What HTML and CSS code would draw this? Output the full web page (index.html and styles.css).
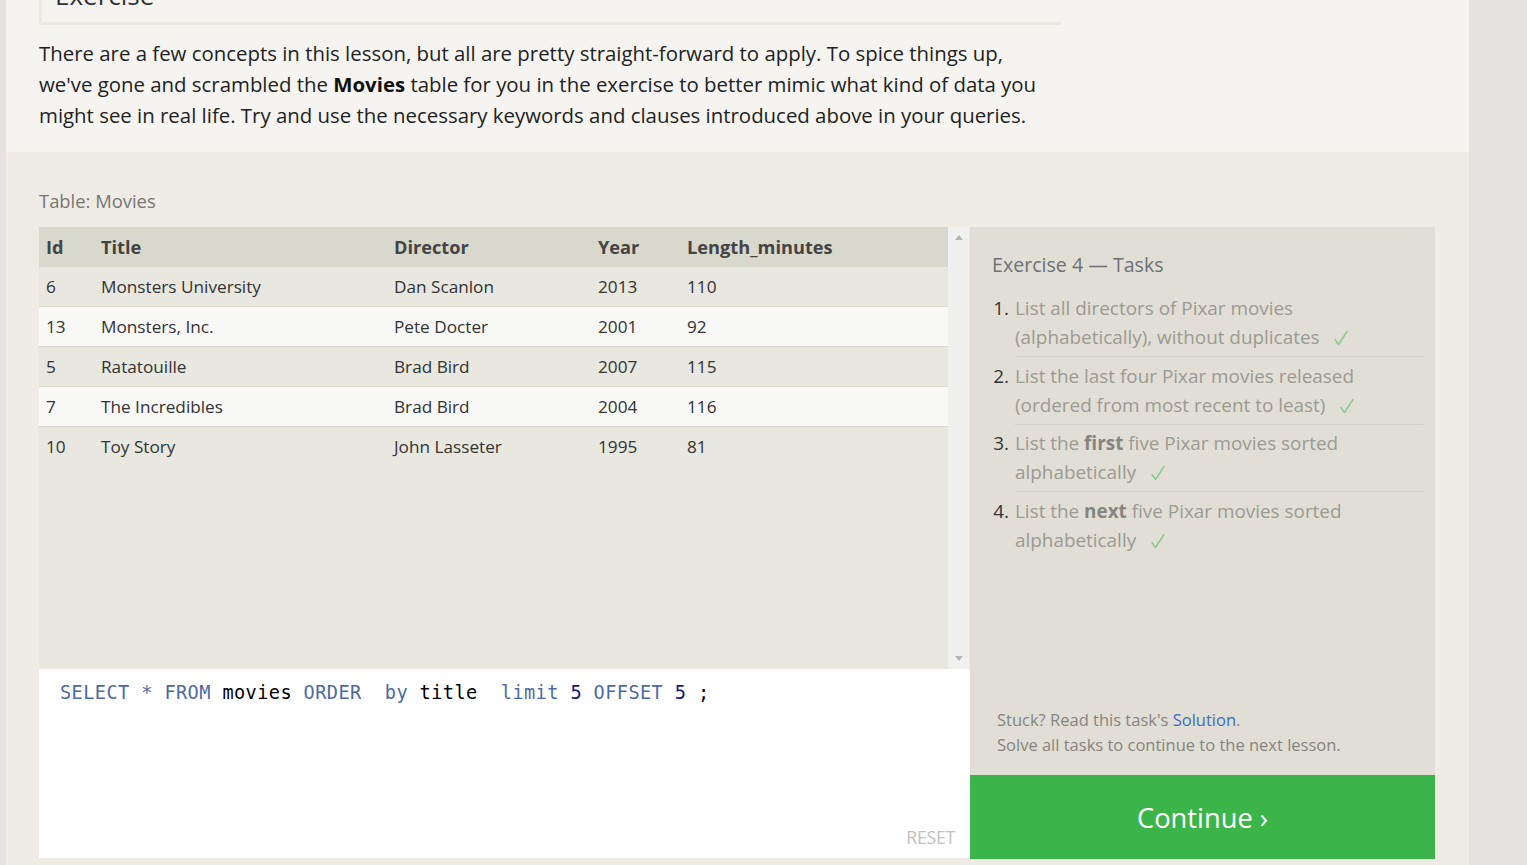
FILE: index.html
```html
<!DOCTYPE html>
<html lang="en">
<head>
<meta charset="utf-8">
<title>SQL Lesson – Exercise</title>
<link rel="stylesheet" href="styles.css">
</head>
<body>
<div class="page">
  <section class="intro">
    <div class="heading"><h2>Exercise</h2></div>
    <p class="lead">There are a few concepts in this lesson, but all are pretty straight-forward to apply. To spice things up, we've gone and scrambled the <strong>Movies</strong> table for you in the exercise to better mimic what kind of data you might see in real life. Try and use the necessary keywords and clauses introduced above in your queries.</p>
  </section>
  <section class="exercise">
    <div class="table-label">Table: Movies</div>
    <div class="workspace">
      <div class="left">
        <div class="results">
          <div class="table-wrap">
            <table class="movies">
              <thead>
                <tr><th class="c-id">Id</th><th class="c-title">Title</th><th class="c-dir">Director</th><th class="c-year">Year</th><th class="c-len">Length_minutes</th></tr>
              </thead>
              <tbody>
                <tr><td>6</td><td>Monsters University</td><td>Dan Scanlon</td><td>2013</td><td>110</td></tr>
                <tr><td>13</td><td>Monsters, Inc.</td><td>Pete Docter</td><td>2001</td><td>92</td></tr>
                <tr><td>5</td><td>Ratatouille</td><td>Brad Bird</td><td>2007</td><td>115</td></tr>
                <tr><td>7</td><td>The Incredibles</td><td>Brad Bird</td><td>2004</td><td>116</td></tr>
                <tr><td>10</td><td>Toy Story</td><td>John Lasseter</td><td>1995</td><td>81</td></tr>
              </tbody>
            </table>
          </div>
          <div class="scrollbar">
            <span class="arrow up"></span>
            <span class="arrow down"></span>
          </div>
        </div>
        <div class="editor">
          <div class="code"><span class="kw">SELECT</span> <span class="kw">*</span> <span class="kw">FROM</span> <span class="id">movies</span> <span class="kw">ORDER</span>  <span class="kw">by</span> <span class="id">title</span>  <span class="kw">limit</span> <span class="num">5</span> <span class="kw">OFFSET</span> <span class="num">5</span> <span class="id">;</span></div>
          <div class="reset">RESET</div>
        </div>
      </div>
      <div class="right">
        <div class="tasks">
          <h3>Exercise 4 — Tasks</h3>
          <ol class="task-list">
            <li><span class="n">1.</span><span class="t">List all directors of Pixar movies (alphabetically), without duplicates <svg class="check" viewBox="0 0 14 16" aria-hidden="true"><polyline points="1,9.5 4.5,14.5 13,1.5"/></svg></span></li>
            <li><span class="n">2.</span><span class="t">List the last four Pixar movies released (ordered from most recent to least) <svg class="check" viewBox="0 0 14 16" aria-hidden="true"><polyline points="1,9.5 4.5,14.5 13,1.5"/></svg></span></li>
            <li><span class="n">3.</span><span class="t">List the <b>first</b> five Pixar movies sorted alphabetically <svg class="check" viewBox="0 0 14 16" aria-hidden="true"><polyline points="1,9.5 4.5,14.5 13,1.5"/></svg></span></li>
            <li><span class="n">4.</span><span class="t">List the <b>next</b> five Pixar movies sorted alphabetically <svg class="check" viewBox="0 0 14 16" aria-hidden="true"><polyline points="1,9.5 4.5,14.5 13,1.5"/></svg></span></li>
          </ol>
          <div class="help">
            <div>Stuck? Read this task's <a href="#">Solution</a>.</div>
            <div>Solve all tasks to continue to the next lesson.</div>
          </div>
        </div>
        <a class="continue" href="#">Continue ›</a>
      </div>
    </div>
  </section>
</div>
</body>
</html>
```
FILE: styles.css
```css
* { box-sizing: border-box; }
html, body { margin: 0; padding: 0; }
body {
  background: #e6e2df;
  font-family: "Open Sans", "Noto Sans", sans-serif;
  color: #222;
  height: 865px;
  overflow: hidden;
}
.page {
  margin-left: 6px;
  width: 1463px;
  background: #f5f4f0;
}
.intro {
  padding: 0 33px 21px 33px;
}
.heading {
  width: 1022px;
  margin-top: -40px;
  height: 65px;
  border-left: 3px solid #ebe9e2;
  border-bottom: 3px solid #ebe9e2;
  padding-left: 13px;
  overflow: hidden;
}
.heading h2 {
  margin: 0;
  font-weight: 400;
  font-size: 26px;
  line-height: 34px;
  padding-top: 18px;
  color: #333;
}
.lead {
  margin: 13px 0 0 0;
  width: 1022px;
  font-size: 20.4px;
  line-height: 31px;
  color: #222;
}
.lead strong { font-weight: 700; color: #111; }

.exercise {
  background: #efece6;
  padding: 36px 34px 8px 33px;
  height: 713px;
}
.table-label {
  font-size: 18.4px;
  line-height: 26px;
  color: #787672;
  margin-bottom: 13px;
}
.workspace {
  display: flex;
  align-items: flex-start;
}
.left {
  width: 931px;
  display: flex;
  flex-direction: column;
}
.results {
  display: flex;
  height: 442px;
  background: #e8e7e0;
}
.table-wrap {
  width: 909px;
  height: 442px;
}
.movies {
  width: 100%;
  border-collapse: collapse;
  border-spacing: 0;
  font-size: 17.2px;
  color: #333;
}
.movies th {
  background: #d9d8cd;
  text-align: left;
  font-weight: 700;
  font-size: 18.2px;
  color: #444;
  height: 40px;
  padding: 0 7px;
}
.movies td {
  height: 40px;
  padding: 0 7px 1px 7px;
  box-shadow: inset 0 -1px 0 #d8d7cf;
}
.movies tbody tr:nth-child(even) td { background: #f8f8f7; }
.movies tbody tr:last-child td { box-shadow: none; }
.movies .c-id { width: 55px; }
.movies .c-title { width: 293px; }
.movies .c-dir { width: 204px; }
.movies .c-year { width: 89px; }
.scrollbar {
  width: 21px;
  background: #f0f0ef;
  display: flex;
  flex-direction: column;
  justify-content: space-between;
  align-items: center;
  padding: 8px 0 8px 0;
}
.arrow {
  width: 0; height: 0;
  border-left: 4px solid transparent;
  border-right: 4px solid transparent;
}
.arrow.up { border-bottom: 5px solid #b4b4b4; }
.arrow.down { border-top: 5px solid #b4b4b4; }

.editor {
  background: #fff;
  height: 189px;
  padding: 11px 14px 9px 21px;
  display: flex;
  flex-direction: column;
  justify-content: space-between;
}
.code {
  font-family: "DejaVu Sans Mono", monospace;
  font-size: 18.6px;
  letter-spacing: 0.4px;
  line-height: 26px;
  white-space: pre;
  color: #000;
}
.code .kw { color: #4c6aa5; }
.code .num { color: #14147f; }
.code .id { color: #000; }
.reset {
  align-self: flex-end;
  font-size: 17.8px;
  color: #c1c1c1;
  letter-spacing: -0.3px;
  margin-right: 1px;
}

.right {
  width: 465px;
  display: flex;
  flex-direction: column;
}
.tasks {
  background: #e1dfd5;
  height: 548px;
  padding: 23px 12px 18px 22px;
  display: flex;
  flex-direction: column;
}
.tasks h3 {
  margin: 0 0 14px 0;
  font-weight: 400;
  font-size: 19.6px;
  line-height: 30px;
  color: #6d7175;
}
.task-list {
  list-style: none;
  margin: 0;
  padding: 0;
  flex: 1;
}
.task-list li {
  display: flex;
  font-size: 18.9px;
  line-height: 29px;
  color: #9b9a94;
}
.task-list li + li { margin-top: 4.5px; }
.task-list .n {
  width: 20px;
  text-align: right;
  padding-right: 4px;
  margin-left: 1px;
  margin-right: 2px;
  color: #333;
  flex: none;
}
.task-list .t {
  flex: 1;
  padding-bottom: 4px;
  border-bottom: 1px solid #d3d1c7;
}
.task-list li:last-child .t { border-bottom: none; }
.task-list b { color: #86857f; }
.check {
  display: inline-block;
  width: 14px;
  height: 16px;
  margin-left: 10px;
  vertical-align: -2px;
  fill: none;
  stroke: #86c98a;
  stroke-width: 1.4;
  stroke-linecap: round;
  stroke-linejoin: round;
}
.help {
  font-size: 16.5px;
  line-height: 25px;
  color: #858480;
  padding-left: 5px;
}
.help a { color: #3e6cbe; text-decoration: none; }
.continue {
  display: flex;
  align-items: center;
  justify-content: center;
  height: 84px;
  background: #3bb54a;
  color: #fff;
  font-size: 27.3px;
  text-decoration: none;
}
```
